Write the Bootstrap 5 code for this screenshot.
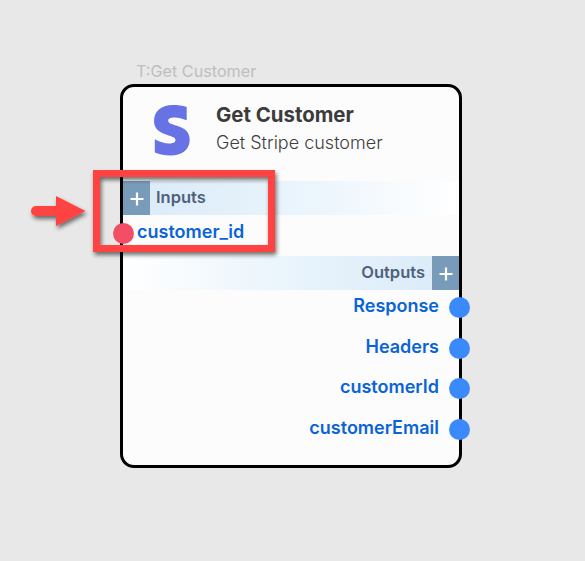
<!DOCTYPE html>
<html lang="en">
<head>
<meta charset="utf-8">
<meta name="viewport" content="width=device-width, initial-scale=1">
<title>Get Customer</title>
<link href="https://cdn.jsdelivr.net/npm/bootstrap@5.3.0/dist/css/bootstrap.min.css" rel="stylesheet">
<style>
body{background:#e8e8e8;font-family:Inter,"Liberation Sans",sans-serif;height:561px;overflow:hidden}
.flow{padding:59px 0 0 120px}
.node-tag{color:#bebebe;font-size:16.2px;height:25px;line-height:24px;padding-left:16px;white-space:nowrap}
.node-box{width:342px;height:384px;border:3px solid #000;border-radius:14px;background:#fcfcfc}
.node-head{height:94px;padding:14px 0 0 31px}
.node-logo{width:36px;height:51px;margin-top:4px}
.node-text{margin-left:26px}
.node-name{font-size:20.4px;line-height:27px;color:#3b3b3b}
.node-desc{font-size:18px;line-height:30px;color:#3f3f3f;font-weight:300}
.bar{height:34px;color:#4f617b;font-size:16.500px;line-height:32px;font-weight:600}
.bar-in{background:linear-gradient(90deg,#d9eaf8,#e9f4fc 50%,#fff)}
.bar-out{background:linear-gradient(270deg,#d9eaf8,#e9f4fc 50%,#fff)}
.plus{width:27px;height:34px;background:#779bb8;padding-top:2px}
.bar-in .bar-label{padding-left:6px}
.bar-out .bar-label{padding-right:7px}
.port{height:40.500px;color:#0a64d8;font-size:18px;line-height:24px;font-weight:600}
.port-in{height:37px;margin-bottom:3.500px}
.outputs{margin-top:-2px}
.port-label{padding-bottom:3px}
.port-in .port-label{padding-left:3px}
.outputs .port-label{padding-right:10px}
.dot{width:21px;height:21px;border-radius:50%;flex:none}
.dot-in{background:#f24e66;margin-left:-10px}
.dot-out{background:#3b8afc;margin-right:-11px}
</style>
<script src="https://cdn.jsdelivr.net/npm/bootstrap@5.3.0/dist/js/bootstrap.bundle.min.js"></script>
</head>
<body class="position-relative">
<main class="flow">
  <div class="node-tag"><span>T:Get Customer</span></div>
  <section class="node-box">
    <header class="node-head d-flex align-items-start">
      <svg class="node-logo" viewBox="0 0 36 51"><path fill="#6772e5" d="M32.700 2V15.300C28.500 13.700 24.500 12.500 20.600 12.500C16.500 12.500 14.200 13.500 14.200 15.700C14.200 21.800 35.700 18.500 35.700 34.500C35.700 45 27.500 50.500 16.500 50.500C11 50.500 5.500 49.500.8 47.500V34.200C5.500 36.700 10.500 38.500 15.500 38.500C19 38.500 21.500 37.500 21.500 35C21.500 29 0 31.500 0 16C0 6 7.500 0 19 0C24 0 28.500.5 32.700 2Z"/></svg>
      <div class="node-text">
        <div class="node-name fw-bold"><span>Get Customer</span></div>
        <div class="node-desc"><span>Get Stripe customer</span></div>
      </div>
    </header>
    <div class="bar bar-in d-flex">
      <div class="plus d-flex align-items-center justify-content-center"><svg width="16" height="16" viewBox="0 0 16 16"><path d="M8 1.500V14.500M1.500 8H14.500" stroke="#fff" stroke-width="2.200"/></svg></div>
      <span class="bar-label">Inputs</span>
    </div>
    <div class="port port-in d-flex align-items-center">
      <span class="dot dot-in"></span><span class="port-label">customer_id</span>
    </div>
    <div class="bar bar-out d-flex justify-content-end">
      <span class="bar-label">Outputs</span>
      <div class="plus d-flex align-items-center justify-content-center"><svg width="16" height="16" viewBox="0 0 16 16"><path d="M8 1.500V14.500M1.500 8H14.500" stroke="#fff" stroke-width="2.200"/></svg></div>
    </div>
    <div class="outputs">
      <div class="port d-flex align-items-center justify-content-end"><span class="port-label">Response</span><span class="dot dot-out"></span></div>
      <div class="port d-flex align-items-center justify-content-end"><span class="port-label">Headers</span><span class="dot dot-out"></span></div>
      <div class="port d-flex align-items-center justify-content-end"><span class="port-label">customerId</span><span class="dot dot-out"></span></div>
      <div class="port d-flex align-items-center justify-content-end"><span class="port-label">customerEmail</span><span class="dot dot-out"></span></div>
    </div>
  </section>
</main>
<svg class="position-absolute top-0 start-0 pe-none" width="585" height="561" viewBox="0 0 585 561">
  <defs><filter id="soft" x="-20%" y="-30%" width="140%" height="170%"><feDropShadow dx="1.500" dy="3" stdDeviation="2.300" flood-color="#000" flood-opacity=".55"/></filter></defs>
  <g filter="url(#soft)">
    <rect x="96.500" y="173.500" width="175" height="75" fill="none" stroke="#ff4242" stroke-width="7"/>
    <path fill="#ff4242" d="M36 206H56V196L85.500 211L56 226V216H36A5 5 0 0 1 36 206Z"/>
  </g>
</svg>
</body>
</html>
